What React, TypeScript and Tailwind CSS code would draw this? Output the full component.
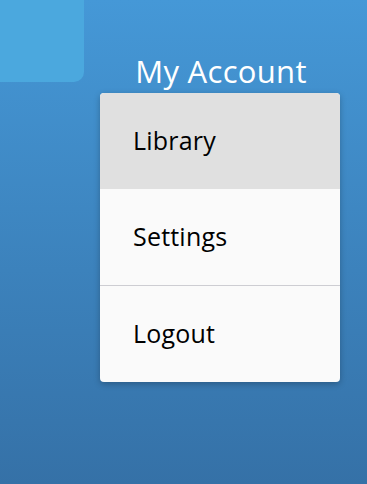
import React from "react";

export default function App() {
  return (
    <div
      className="relative w-[367px] h-[484px] overflow-hidden bg-gradient-to-b from-[#4598d7] to-[#3571a7]"
      style={{ fontFamily: "'Open Sans', 'Noto Sans', sans-serif" }}
    >
      <div className="absolute left-0 top-0 w-[84px] h-[82px] rounded-br-[10px] bg-[#4ba8de]" />
      <div className="absolute left-[100px] top-[50px] w-[240px] flex flex-col">
        <div className="text-white text-[31px] leading-[42px] text-center pl-[2px] h-[43px] tracking-[0.3px]">My Account</div>
        <div className="rounded-[4px] overflow-hidden shadow-[0_2px_6px_rgba(0,0,0,0.25)] bg-[#fafafa] text-black text-[25px] tracking-[0.2px]">
          <div className="h-[96px] flex items-center pl-[33px] bg-[#e0e0e0]">Library</div>
          <div className="h-[97px] flex items-center pl-[33px] border-b border-[#cdcdd2]">Settings</div>
          <div className="h-[96px] flex items-center pl-[33px]">Logout</div>
        </div>
      </div>
    </div>
  );
}
